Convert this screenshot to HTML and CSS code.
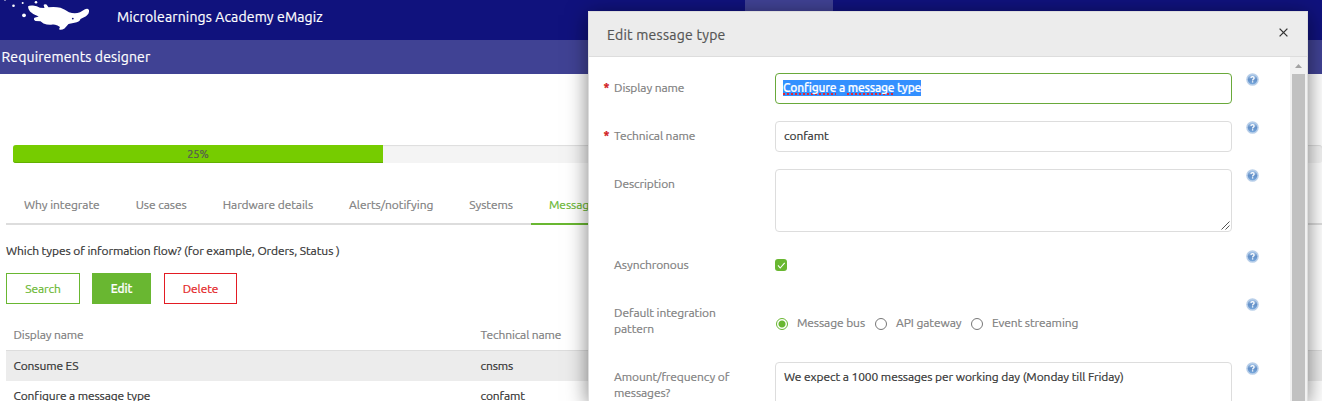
FILE: index.html
```html
<!DOCTYPE html>
<html lang="en">
<head>
<meta charset="utf-8">
<title>Requirements designer</title>
<link rel="stylesheet" href="styles.css">
</head>
<body>
<svg class="defs" width="0" height="0">
  <defs>
    <linearGradient id="ball" x1="0" y1="0" x2="0" y2="1"><stop offset="0" stop-color="#a9c8ea"/><stop offset=".5" stop-color="#6591c8"/><stop offset="1" stop-color="#76a7dc"/></linearGradient>
    <symbol id="help" viewBox="0 0 13 13">
      <circle cx="6.5" cy="6.5" r="6.3" fill="#b9cfe9"/>
      <circle cx="6.5" cy="6.5" r="4.8" fill="url(#ball)"/>
      <path d="M4.900 4.900Q5 3.600 6.500 3.600Q8.100 3.600 8.100 4.900Q8.100 5.800 7.200 6.300Q6.600 6.600 6.600 7.400M6.600 8.300V9.500" fill="none" stroke="#fff" stroke-width="1.300"/>
    </symbol>
  </defs>
</svg>
<header class="topbar">
  <svg class="logo" width="92" height="32" viewBox="0 0 92 32">
    <g fill="#fff"><circle cx="13.500" cy="5.700" r="1.300"/><circle cx="22.700" cy="3" r="1"/><circle cx="36" cy="2.300" r="1.300"/><circle cx="24" cy="15.300" r="1.900"/><circle cx="5" cy="0" r=".8"/>
    <path d="M28 6.500Q29 5.200 33 5.500Q37 6 40 7.800L44.500 8L43.600 5Q44.500 3.600 46.500 4.600L48.500 7.300Q55 6.600 60.500 7.700Q65 9.300 69 12.300Q75 14 80 12.300L85 9.300Q88 8 89 10.200Q89.500 13.500 86 16.200L80.500 19Q79.500 22.200 74.500 22.800L68.500 24L64.500 28.500Q61.500 30.200 59.300 29.500Q59 28.200 60 27L57.500 25.400Q54 24.200 52.500 24.600Q48 25.300 43.500 23.600L40.500 21.300L35.500 21Q33 19.500 34.500 17.800L38.700 16.400Q33 14.800 30 11.500Q28 9 28 6.500Z"/></g>
    <circle cx="72.800" cy="18.600" r=".9" fill="#11137d"/>
  </svg>
  <span class="brand">Microlearnings Academy eMagiz</span>
  <span class="nav-active"></span>
</header>
<div class="subbar"><span>Requirements designer</span></div>
<main class="content">
  <div class="progress"><div class="progress-fill"><span>25%</span></div></div>
  <nav class="tabs">
    <a>Why integrate</a><a>Use cases</a><a>Hardware details</a><a>Alerts/notifying</a><a>Systems</a><a class="on">Messages</a>
  </nav>
  <p class="question">Which types of information flow? (for example, Orders, Status )</p>
  <div class="buttons">
    <button class="btn search">Search</button><button class="btn edit">Edit</button><button class="btn delete">Delete</button>
  </div>
  <div class="table">
    <div class="tr head"><span>Display name</span><span>Technical name</span></div>
    <div class="tr selected"><span>Consume ES</span><span>cnsms</span></div>
    <div class="tr"><span>Configure a message type</span><span>confamt</span></div>
  </div>
</main>
<section class="modal">
  <div class="modal-head"><h4>Edit message type</h4>
    <svg width="9" height="9" viewBox="0 0 9 9"><path d="M.6.6L8.400 8.400M8.400.6L.6 8.400" stroke="#333" stroke-width="1.300"/></svg>
  </div>
  <div class="modal-body">
    <div class="form">
      <div class="row r48"><label><b>*</b><span>Display name</span></label><div class="control field focus"><mark><u>Configure</u> a <u>message</u> type</mark></div><svg class="help"><use href="#help"/></svg></div>
      <div class="row r48"><label><b>*</b><span>Technical name</span></label><div class="control field">confamt</div><svg class="help"><use href="#help"/></svg></div>
      <div class="row r81"><label><b></b><span>Description</span></label><div class="control area"><svg class="grip" width="9" height="9" viewBox="0 0 9 9"><path d="M.5 8.500L8.500.5M4.500 8.500L8.500 4.500" stroke="#555" fill="none"/></svg></div><svg class="help"><use href="#help"/></svg></div>
      <div class="row r48"><label><b></b><span>Asynchronous</span></label><div class="control"><span class="check"><svg width="12" height="12" viewBox="0 0 12 12"><path d="M3 6.300L5.200 9L9.700 3.800" fill="none" stroke="#fff" stroke-width="1.100"/></svg></span></div><svg class="help"><use href="#help"/></svg></div>
      <div class="row r64"><label><b></b><span>Default integration<br>pattern</span></label><div class="control radios"><i class="on"></i><span class="o1">Message bus</span><i></i><span class="o2">API gateway</span><i></i><span class="o3">Event streaming</span></div><svg class="help"><use href="#help"/></svg></div>
      <div class="row"><label><b></b><span>Amount/frequency of<br>messages?</span></label><div class="control area text"><span>We expect a 1000 messages per working day (Monday till Friday)</span></div><svg class="help"><use href="#help"/></svg></div>
    </div>
    <div class="scrollbar"><svg width="7" height="4" viewBox="0 0 7 4"><path d="M0 4L3.500 0L7 4Z" fill="#a3a3a3"/></svg><div class="thumb"></div></div>
  </div>
</section>
</body>
</html>
```
FILE: styles.css
```css
* { box-sizing: border-box; }
html { overflow: hidden; }
body { margin: 0; width: 1322px; height: 401px; overflow: hidden; position: relative; background: #fff; color: #333; font: 12px/16px Ubuntu, "Noto Sans", sans-serif; letter-spacing: -0.09px; -webkit-text-stroke: 0.2px; }
.defs { display: block; position: absolute; }
.topbar { height: 40px; background: #10127d; display: flex; align-items: flex-start; }
.logo { display: block; flex: none; }
.brand { margin-left: 25px; width: 628px; color: #fff; font-size: 14px; line-height: 34px; letter-spacing: 0.14px; }
.nav-active { width: 88px; height: 40px; background: #404294; }
.subbar { height: 34px; background: #404294; color: #fff; font-size: 14px; line-height: 34px; padding-left: 1.5px; letter-spacing: 0.13px; }
.content { padding: 71px 0 0 6px; height: 327px; overflow: hidden; }
.progress { height: 18px; margin-left: 7px; background: #f4f4f4; box-shadow: inset 0 1px 1px #ddd; border-radius: 3px; }
.progress-fill { width: 370px; height: 18px; background: #76cc00; box-shadow: inset 0 -1px 0 #62b000; border-radius: 3px 0 0 3px; text-align: center; line-height: 18px; font-size: 11px; color: #555; letter-spacing: 0; }
.tabs { display: flex; margin-top: 22px; height: 40px; border-bottom: 2px solid #ddd; color: #808080; letter-spacing: -0.055px; }
.tabs a { height: 40px; padding: 0 18px; line-height: 40px; white-space: nowrap; }
.tabs .on { color: #69b731; border-bottom: 2px solid #69b731; width: 96px; }
.question { margin: 18px 0 14px; line-height: 16px; letter-spacing: -0.07px; }
.buttons { display: flex; height: 31px; }
.btn { font: inherit; letter-spacing: inherit; padding: 0; border: 1px solid #69b731; border-radius: 0; background: #fff; color: #69b731; }
.search { width: 74px; margin-right: 12px; }
.edit { width: 59px; margin-right: 13px; background: #69b731; color: #fff; font-weight: 500; }
.delete { width: 73px; border-color: #e31b23; color: #e31b23; }
.table { margin-top: 16px; }
.tr { display: grid; grid-template-columns: 467px 1fr; height: 30px; line-height: 30px; padding-left: 7.5px; letter-spacing: -0.12px; }
.tr.head { color: #808080; }
.tr.selected { height: 31px; background: #ececec; border-top: 1px solid #ddd; }
.modal { position: absolute; left: 588px; top: 11px; width: 720px; height: 390px; background: #fff; border: 1px solid #ddd; border-bottom: 0; box-shadow: 0 4px 20px rgba(0,0,0,.5); }
.modal-head { height: 45px; background: #ececec; border-bottom: 1px solid #ddd; display: flex; justify-content: space-between; padding: 0 19px 0 18px; }
.modal-head h4 { margin: 0; font-weight: 400; font-size: 14px; line-height: 47px; color: #555; letter-spacing: 0.25px; }
.modal-head svg { margin-top: 16px; }
.modal-body { display: flex; justify-content: space-between; height: 344px; overflow: hidden; }
.form { padding: 16px 0 0 14px; color: #808080; }
.row { display: grid; grid-template-columns: 172px 457px 27px; }
.r48 { height: 48px; }
.r81 { height: 81px; }
.r64 { height: 64px; }
.row label { display: grid; grid-template-columns: 11px 1fr; padding-top: 7px; white-space: nowrap; }
.row label b { color: #d11a22; padding-left: 0.5px; }
.help { width: 13px; height: 13px; margin-left: 14px; display: block; }
.field { height: 31px; border: 1px solid #ddd; border-radius: 4px; padding: 6px 8px; color: #333; }
.focus { border-color: #69a93a; padding-left: 7px; }
mark { background: #3390ff; color: #fff; font-weight: 500; display: block; width: max-content; letter-spacing: -0.18px; }
mark u { text-decoration: underline dotted #e32636 2px; text-underline-offset: 1px; text-decoration-skip-ink: none; }
.area { height: 63px; border: 1px solid #ddd; border-radius: 4px; display: flex; align-items: flex-end; justify-content: flex-end; padding: 1px; }
.area.text { align-items: flex-start; justify-content: flex-start; padding: 6px 8px; color: #333; white-space: nowrap; }
.check { display: block; width: 12px; height: 12px; margin-top: 9px; border-radius: 3px; background: #69b731; }
.check svg { display: block; }
.radios { display: flex; padding: 17px 0 0 1px; height: 33px; white-space: nowrap; }
.radios i { flex: none; width: 12px; height: 12px; margin-top: 3px; border: 1px solid #777; border-radius: 50%; }
.radios i.on { border-color: #69b731; background: radial-gradient(circle, #69b731 3px, #fff 4px); }
.radios span { margin-left: 9px; }
.radios .o1 { width: 69px; margin-right: 9px; }
.radios .o2 { width: 66px; margin-right: 9px; }
.scrollbar { width: 17px; background: #f1f1f1; display: flex; flex-direction: column; align-items: center; padding-top: 7px; }
.scrollbar svg { display: block; flex: none; }
.thumb { flex: 1; width: 13px; margin-top: 6px; background: #c1c1c1; }
```
